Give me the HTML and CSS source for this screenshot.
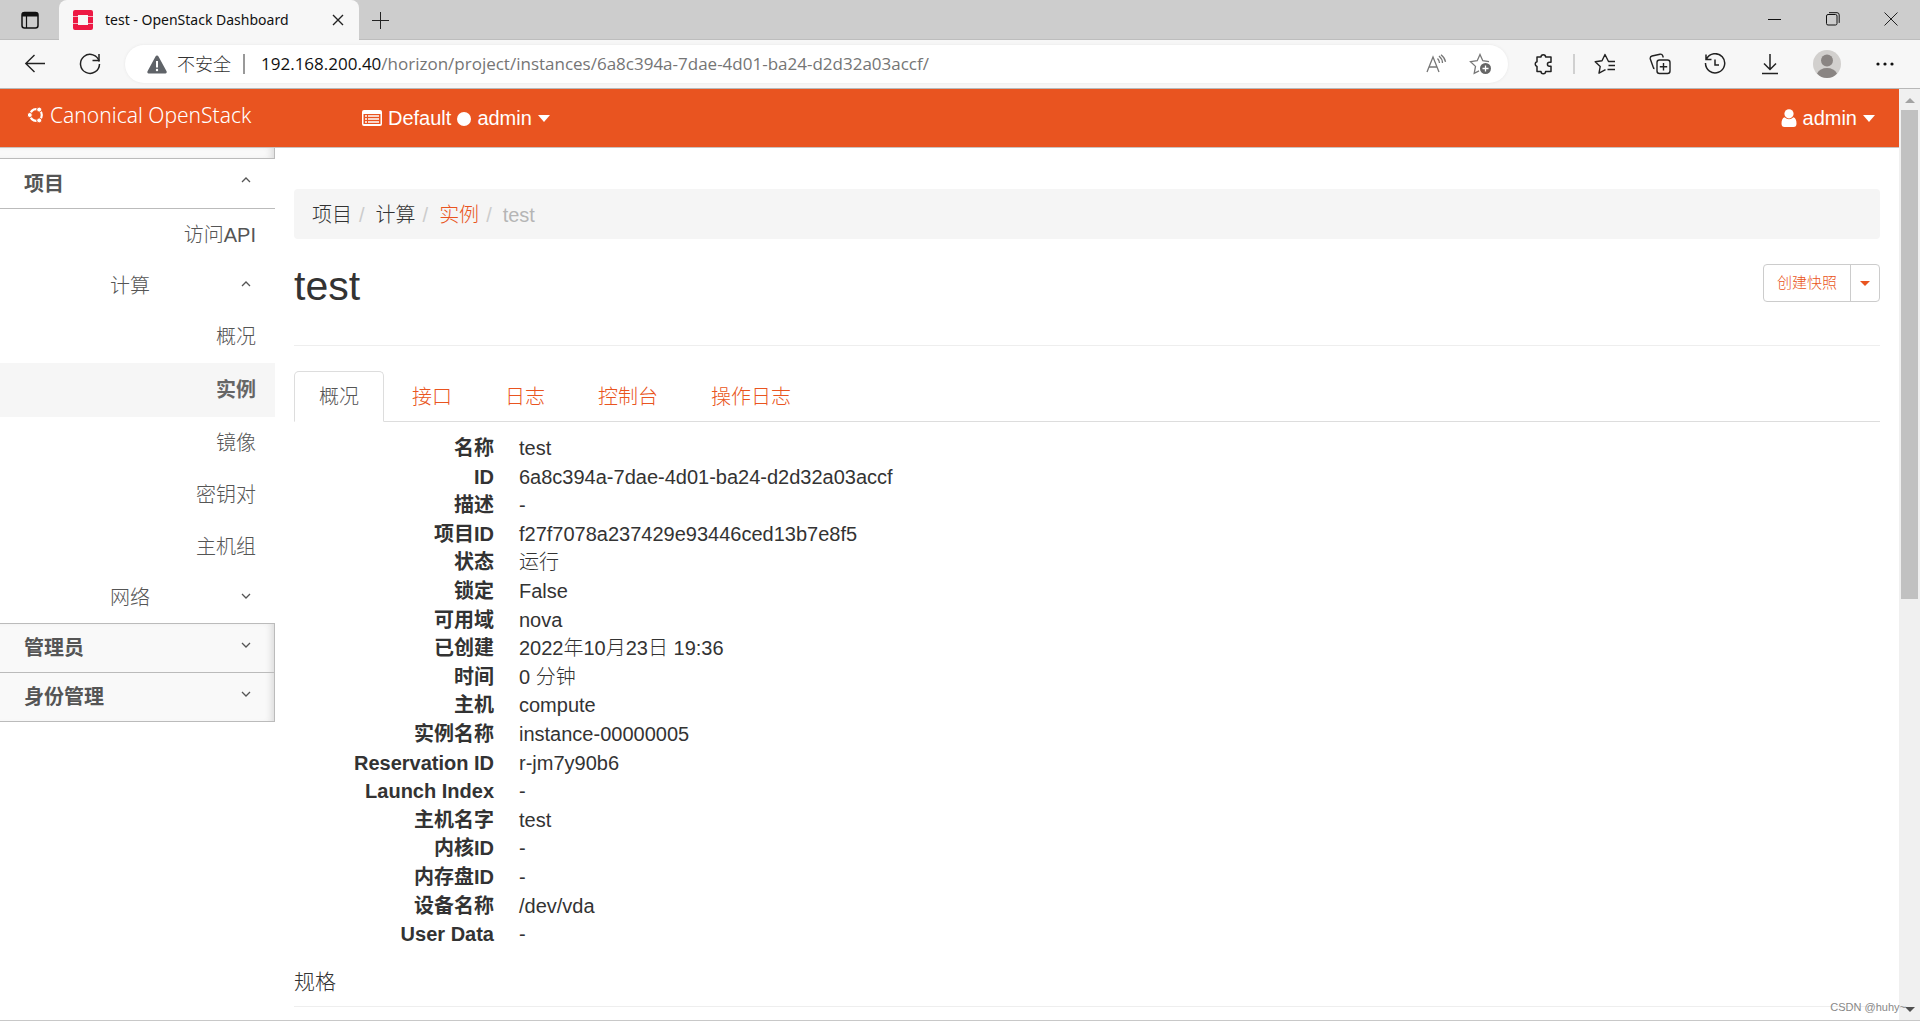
FILE: index.html
```html
<!DOCTYPE html>
<html lang="zh-CN">
<head>
<meta charset="utf-8">
<title>test - OpenStack Dashboard</title>
<link rel="stylesheet" href="styles.css">
</head>
<body>
<header class="browser">
  <div class="tabbar">
    <button class="tab-actions" aria-label="标签页操作"><svg width="20" height="20" viewBox="0 0 20 20"><rect x="2" y="2.500" width="16" height="15.500" rx="2.500" fill="none" stroke="#111" stroke-width="1.500"/><path d="M2 6V4.500Q2 2 4.500 2h11Q18 2 18 4.500V6.500H2z" fill="#111"/><path d="M6.500 6v12" stroke="#111" stroke-width="1.200"/></svg></button>
    <div class="browser-tab">
      <svg class="favicon" width="20" height="20" viewBox="0 0 20 20"><path d="M2 0h16a2 2 0 0 1 2 2v4h-5V5H5v1H0V2a2 2 0 0 1 2-2zM0 7h5v6H0zM15 7h5v6h-5zM0 14h5v1h10v-1h5v4a2 2 0 0 1-2 2H2a2 2 0 0 1-2-2z" fill="#ed1944"/><path d="M0 6h5v8H0zM15 6h5v8h-5z" fill="#ed1944" opacity=".3"/></svg>
      <span class="browser-tab-title">test - OpenStack Dashboard</span>
      <button class="tab-close" aria-label="关闭标签页"><svg width="12" height="12" viewBox="0 0 12 12"><path d="M1 1l10 10M11 1L1 11" stroke="#222" stroke-width="1.400"/></svg></button>
    </div>
    <button class="new-tab" aria-label="新建标签页"><svg width="18" height="18" viewBox="0 0 18 18"><path d="M9.500 1v17M1 9.500h17" stroke="#222"/></svg></button>
    <div class="window-controls">
      <button aria-label="最小化"><svg width="14" height="14" viewBox="0 0 14 14"><path d="M0 7.500h13" stroke="#111"/></svg></button>
      <button aria-label="还原"><svg width="14" height="14" viewBox="0 0 14 14"><rect x=".5" y="2.500" width="10.500" height="10.500" rx="1.500" fill="none" stroke="#111"/><path d="M3 .7h8q2.200 0 2.200 2.200v8" fill="none" stroke="#111"/></svg></button>
      <button aria-label="关闭"><svg width="14" height="14" viewBox="0 0 14 14"><path d="M.5.5l13 13M13.500.5l-13 13" stroke="#222"/></svg></button>
    </div>
  </div>
  <div class="toolbar">
    <button class="tool" aria-label="后退"><svg width="22" height="22" viewBox="0 0 22 22" fill="none" stroke="#222" stroke-width="1.400"><path d="M21 10.500H2M10.500 2L1.800 10.500l8.700 8.500"/></svg></button>
    <button class="tool" aria-label="刷新"><svg width="22" height="22" viewBox="0 0 22 22" fill="none" stroke="#222" stroke-width="1.500"><path d="M20.200 8.500A9.500 9.500 0 1 0 20.500 11"/><path d="M20 1v6.500h-6.500"/></svg></button>
    <form class="address">
      <svg width="20" height="19" viewBox="0 0 20 19"><path d="M10 .5Q11 .5 11.500 1.500l8.200 15Q20 18.500 18.500 18.500H1.500Q0 18.500.4 16.500l8.100-15Q9 .5 10 .5z" fill="#5f6368"/><path d="M10 6v6.500" stroke="#fff" stroke-width="2"/><circle cx="10" cy="15" r="1.200" fill="#fff"/></svg>
      <span class="insecure">不安全</span>
      <span class="address-sep"></span>
      <label class="host" for="url">192.168.200.40</label>
      <input id="url" class="url" type="text" value="/horizon/project/instances/6a8c394a-7dae-4d01-ba24-d2d32a03accf/">
      <button type="button" class="address-tool" aria-label="大声朗读"><svg width="22" height="20" viewBox="0 0 22 20" fill="none" stroke="#777" stroke-width="1.300"><path d="M2 18L8 3l6 15M4 13h8M12.500 4.500q2 2 2 4.500M14 2q3.500 3 3.500 7M16 .8q4 3.200 4.500 7"/></svg></button>
      <button type="button" class="address-tool" aria-label="添加到收藏夹"><svg width="23" height="22" viewBox="0 0 23 22"><path d="M20 8.700l-6.200-1L11 1.500 8.200 7.700l-6.700 1 5 4.700-1.300 6.900L10 17.800" fill="none" stroke="#777" stroke-width="1.300"/><circle cx="16.500" cy="15.500" r="5.500" fill="#666"/><path d="M16.500 12.500v6M13.500 15.500h6" stroke="#fff" stroke-width="1.300"/></svg></button>
    </form>
    <button class="tool" aria-label="扩展"><svg width="22" height="22" viewBox="0 0 22 22" fill="none" stroke="#222" stroke-width="1.500" stroke-linejoin="round"><path d="M4 4h4a2.300 2.300 0 0 1 4.600 0H18v5.200h-1.500a2 2 0 0 0 0 4.100H18V18.500H12.600a2.300 2.300 0 0 1-4.600 0H4v-5a2.500 2.500 0 0 1 0-4.800z"/></svg></button>
    <span class="tool-sep"></span>
    <button class="tool" aria-label="收藏夹"><svg width="22" height="22" viewBox="0 0 22 22" fill="none" stroke="#222" stroke-width="1.400" stroke-linejoin="round"><path d="M21 8.500h-6.500L11 1.500 8 7.700l-6.800 1 5 4.800L5 20.200l6.500-3.500M14.500 12.500H21M13.500 16.500H21"/></svg></button>
    <button class="tool" aria-label="集锦"><svg width="22" height="22" viewBox="0 0 22 22" fill="none" stroke="#222" stroke-width="1.400"><rect x="8" y="7" width="13" height="13.500" rx="2.500"/><path d="M14.500 10v7.500M10.800 13.800h7.400M5.500 15.500Q4.300 15.500 3.800 13L1.300 6Q.8 3.700 3 3L11 1.200q2-.4 2.700 1.500l.6 1.800"/></svg></button>
    <button class="tool" aria-label="历史记录"><svg width="22" height="22" viewBox="0 0 22 22" fill="none" stroke="#222" stroke-width="1.500"><path d="M2.500 6A9.600 9.600 0 1 1 1.500 10M2 1.500V6.500h5.500M11 6.500V12h4"/></svg></button>
    <button class="tool" aria-label="下载"><svg width="18" height="22" viewBox="0 0 18 22" fill="none" stroke="#222" stroke-width="1.500"><path d="M9 1v15M3 10.500L9 16.500l6-6M1 20.500h16"/></svg></button>
    <button class="tool tool-profile" aria-label="个人资料"><svg width="28" height="28" viewBox="0 0 28 28"><circle cx="14" cy="14" r="14" fill="#d2d0ce"/><circle cx="14" cy="10.500" r="6" fill="#8a8583"/><path d="M4 23.500q3-5.500 10-5.500t10 5.500Q20 28 14 28T4 23.500z" fill="#8a8583"/></svg></button>
    <button class="tool" aria-label="设置及其他"><svg width="18" height="4" viewBox="0 0 18 4" fill="#111"><circle cx="2" cy="2" r="1.600"/><circle cx="9" cy="2" r="1.600"/><circle cx="16" cy="2" r="1.600"/></svg></button>
  </div>
</header>

<div class="viewport">
  <div class="page">
    <nav class="navbar">
      <a class="brand" href="#"><svg width="18" height="18" viewBox="0 0 18 18"><circle cx="10" cy="9" r="5.800" fill="none" stroke="#fff" stroke-width="2.200"/><g stroke="#e95420" fill="#fff" stroke-width="1"><circle cx="3.800" cy="9" r="2.500"/><circle cx="13.200" cy="3.600" r="2.500"/><circle cx="13.200" cy="14.400" r="2.500"/></g></svg>Canonical OpenStack</a>
      <button class="nav-menu"><svg width="20" height="16" viewBox="0 0 20 16"><path d="M2 0h16a2 2 0 0 1 2 2v12a2 2 0 0 1-2 2H2a2 2 0 0 1-2-2V2a2 2 0 0 1 2-2zM1.500 4v10h17V4z" fill="#fff" fill-rule="evenodd"/><path d="M3 6h2M6 6h11M3 9h2M6 9h11M3 12h2M6 12h11" stroke="#fff" stroke-width="1.500"/></svg><span>Default</span><i class="dot"></i><span>admin</span><i class="caret"></i></button>
      <button class="nav-menu nav-user"><svg width="16" height="18" viewBox="0 0 16 18" fill="#fff"><circle cx="8" cy="4.800" r="4.600"/><path d="M3.500 8.300Q8 12 12.500 8.300 15.500 9.500 15.500 14.500q0 3.500-3 3.500h-9q-3 0-3-3.500 0-5 3-6.200z"/></svg><span>admin</span><i class="caret"></i></button>
    </nav>
    <div class="layout">
      <aside class="sidebar">
        <div class="sidebar-cap"></div>
        <section class="open">
          <a class="dashboard" href="#">项目<svg class="chevron" width="10" height="14" viewBox="0 0 10 14"><path d="M1 7l4-4 4 4"/></svg></a>
          <ul class="panels">
            <li><a class="panel" href="#">访问API</a></li>
            <li><a class="group" href="#"><span>计算</span><svg class="chevron" width="10" height="14" viewBox="0 0 10 14"><path d="M1 7l4-4 4 4"/></svg></a></li>
            <li><a class="panel" href="#">概况</a></li>
            <li><a class="panel active" href="#">实例</a></li>
            <li><a class="panel" href="#">镜像</a></li>
            <li><a class="panel" href="#">密钥对</a></li>
            <li><a class="panel" href="#">主机组</a></li>
            <li><a class="group" href="#"><span>网络</span><svg class="chevron" width="10" height="14" viewBox="0 0 10 14"><path d="M1 3l4 4 4-4"/></svg></a></li>
          </ul>
        </section>
        <section class="closed">
          <a class="dashboard" href="#">管理员<svg class="chevron" width="10" height="14" viewBox="0 0 10 14"><path d="M1 3l4 4 4-4"/></svg></a>
          <a class="dashboard" href="#">身份管理<svg class="chevron" width="10" height="14" viewBox="0 0 10 14"><path d="M1 3l4 4 4-4"/></svg></a>
        </section>
      </aside>
      <main class="content">
        <ol class="breadcrumb">
          <li>项目</li>
          <li>计算</li>
          <li><a href="#">实例</a></li>
          <li class="current">test</li>
        </ol>
        <div class="page-header">
          <h1>test</h1>
          <div class="actions">
            <button class="action">创建快照</button>
            <button class="action-more" aria-label="更多操作"><i class="caret caret-small"></i></button>
          </div>
        </div>
        <ul class="tabs">
          <li class="selected"><a href="#">概况</a></li>
          <li><a href="#">接口</a></li>
          <li><a href="#">日志</a></li>
          <li><a href="#">控制台</a></li>
          <li><a href="#">操作日志</a></li>
        </ul>
        <dl class="details">
          <dt>名称</dt><dd>test</dd>
          <dt>ID</dt><dd>6a8c394a-7dae-4d01-ba24-d2d32a03accf</dd>
          <dt>描述</dt><dd>-</dd>
          <dt>项目ID</dt><dd>f27f7078a237429e93446ced13b7e8f5</dd>
          <dt>状态</dt><dd>运行</dd>
          <dt>锁定</dt><dd>False</dd>
          <dt>可用域</dt><dd>nova</dd>
          <dt>已创建</dt><dd>2022年10月23日 19:36</dd>
          <dt>时间</dt><dd>0 分钟</dd>
          <dt>主机</dt><dd>compute</dd>
          <dt>实例名称</dt><dd>instance-00000005</dd>
          <dt>Reservation ID</dt><dd>r-jm7y90b6</dd>
          <dt>Launch Index</dt><dd>-</dd>
          <dt>主机名字</dt><dd>test</dd>
          <dt>内核ID</dt><dd>-</dd>
          <dt>内存盘ID</dt><dd>-</dd>
          <dt>设备名称</dt><dd>/dev/vda</dd>
          <dt>User Data</dt><dd>-</dd>
        </dl>
        <h4 class="section-title">规格</h4>
      </main>
    </div>
  </div>
  <div class="scrollbar">
    <i class="arrow arrow-up"></i>
    <div class="track"><div class="thumb"></div></div>
    <i class="arrow arrow-down"></i>
  </div>
  <div class="watermark">CSDN @huhy~</div>
</div>
</body>
</html>
```
FILE: styles.css
```css
* { box-sizing: border-box; }

body {
  margin: 0;
  height: 100vh;
  display: flex;
  flex-direction: column;
  overflow: hidden;
  background: #fff;
  color: #333;
  font: 300 20px/28px "Liberation Sans", "Noto Sans CJK SC", sans-serif;
}

button, input { font: inherit; color: inherit; border: 0; padding: 0; background: none; }
button { display: flex; align-items: center; justify-content: center; }
a { color: inherit; text-decoration: none; }
ul, ol, dl { margin: 0; padding: 0; list-style: none; }
svg { flex: none; }

/* browser window */
.browser { flex: none; font-family: "Open Sans", "Noto Sans CJK SC", sans-serif; font-weight: 400; }

.tabbar {
  display: flex;
  height: 40px;
  background: #cdcdcd;
  box-shadow: inset 0 -1px #bdbdbd;
}
.tab-actions { width: 59px; height: 39px; }
.browser-tab {
  display: flex;
  align-items: center;
  width: 300px;
  padding: 0 14px;
  background: #f7f7f7;
  border-radius: 8px 8px 0 0;
}
.browser-tab-title { flex: 1; margin-left: 12px; font-family: "Noto Sans", sans-serif; font-size: 14px; line-height: 20px; color: #111; white-space: nowrap; }
.tab-close { width: 14px; height: 20px; }
.new-tab { width: 42px; height: 39px; }
.window-controls { display: flex; margin-left: auto; }
.window-controls button { width: 58px; height: 38px; }

.toolbar {
  display: flex;
  align-items: center;
  height: 49px;
  padding: 0 8px 0 7px;
  background: #f7f7f7;
  border-bottom: 1px solid #b8b8b8;
}
.tool { width: 55px; height: 40px; }
.tool-profile { width: 60px; }
.tool-sep { width: 2px; height: 20px; margin: 0 2px; background: #d0d0d0; }
.address {
  flex: 1;
  display: flex;
  align-items: center;
  height: 38px;
  margin: 0 8px;
  padding: 0 6px 0 22px;
  border-radius: 19px;
  background: #fff;
  font-size: 17px;
  line-height: 24px;
  box-shadow: 0 0 3px #e6e6e6;
}
.insecure { margin-left: 10px; font-size: 18px; font-weight: 300; color: #333; }
.address-sep { width: 2px; height: 20px; margin: 0 16px 0 12px; background: #999; }
.host { color: #111; }
.url { flex: 1; min-width: 0; color: #757575; outline: 0; }
.address-tool { width: 44px; height: 36px; }

/* horizon page */
.viewport {
  position: relative;
  flex: 1;
  display: flex;
  min-height: 0;
  border-bottom: 1px solid #c8c8c8;
}
.page { flex: 1; min-width: 0; overflow: hidden; }

.navbar {
  display: flex;
  align-items: center;
  height: 59px;
  padding: 0 24px 0 26px;
  background: #e95420;
  border-bottom: 1px solid #c9c3c0;
  color: #fff;
}
.brand {
  display: flex;
  align-items: center;
  gap: 6px;
  width: 336px;
  padding-bottom: 6px;
  font-family: "Noto Sans", sans-serif;
  font-size: 21px;
}
.nav-menu { gap: 6px; }
.nav-user { margin-left: auto; }
.dot { width: 14px; height: 14px; margin: 2px 0 0; border-radius: 50%; background: #fff; }
.caret { border: 6px solid transparent; border-top: 7px solid currentColor; border-bottom: 0; }
.caret-small { border-width: 5px; border-bottom: 0; }

.layout { display: flex; align-items: flex-start; }

.sidebar { flex: none; width: 275px; color: #555; }
.sidebar-cap, .closed {
  background: #f9f9f9;
  border-right: 1px solid #bbb;
  box-shadow: inset -6px 0 6px -3px #ddd;
}
.sidebar-cap { height: 11px; border-bottom: 1px solid #bbb; }
.dashboard {
  display: flex;
  align-items: center;
  justify-content: space-between;
  height: 50px;
  padding: 0 24px;
  border-bottom: 1px solid #bbb;
  font-weight: 700;
}
.closed { border-top: 1px solid #bbb; }
.closed .dashboard { height: 49px; padding-right: 23px; }
.chevron { fill: none; stroke: #555; stroke-width: 1.3; }
.dashboard .chevron { margin-bottom: 3px; }
.panel { display: flex; align-items: center; justify-content: flex-end; height: 52px; padding-right: 19px; }
.active { height: 54px; background: #f6f6f6; font-weight: 700; color: #666; }
.group { display: flex; align-items: center; justify-content: space-between; height: 50px; padding: 0 24px 0 110px; }

.content { flex: 1; min-width: 0; padding: 41px 19px 0; }

.breadcrumb {
  display: flex;
  align-items: center;
  height: 50px;
  padding: 2px 18px 0;
  border-radius: 4px;
  background: #f5f5f5;
}
.breadcrumb li + li::before { content: "/"; padding: 0 11px 0 7px; color: #ccc; }
.breadcrumb a { color: #e95420; }
.breadcrumb .current { color: #b5b5b5; }

.page-header {
  display: flex;
  align-items: flex-start;
  justify-content: space-between;
  height: 107px;
  padding-top: 25px;
  border-bottom: 1px solid #eee;
}
h1 { margin: 0; font-size: 41px; line-height: 44px; font-weight: 400; }
.actions { display: flex; height: 38px; border: 1px solid #ccc; border-radius: 4px; color: #e95420; }
.action { padding: 0 13px; font-size: 15px; font-weight: 300; line-height: 20px; }
.action-more { width: 29px; border-left: 1px solid #ccc; }

.tabs { display: flex; gap: 3px; margin-top: 25px; border-bottom: 1px solid #ddd; color: #e95420; }
.tabs a {
  display: block;
  height: 51px;
  margin-bottom: -1px;
  padding: 11px 24px;
  border: 1px solid transparent;
  border-radius: 5px 5px 0 0;
}
.tabs .selected a { border-color: #ddd; border-bottom-color: #fff; background: #fff; color: #555; }

.details {
  display: grid;
  grid-template-columns: 200px 1fr;
  column-gap: 25px;
  margin-top: 12px;
  line-height: 1.43;
}
dt { font-weight: 700; text-align: right; }
dd { margin: 0; }

.section-title {
  margin: 5px 0 0;
  padding: 14px 0 10px;
  border-bottom: 1px solid #eee;
  font-size: 21px;
  font-weight: 300;
  line-height: 28px;
}

.scrollbar { display: flex; flex-direction: column; align-items: center; width: 21px; background: #f0f0f0; }
.track { flex: 1; width: 17px; }
.thumb { height: 55%; background: #c1c1c1; }
.arrow { border: 5px solid transparent; }
.arrow-up { margin: 4px 0 7px; border-bottom-color: #a3a3a3; }
.arrow-down { margin: 8px 0 3px; border-top-color: #505050; }

.watermark { position: absolute; right: 14px; bottom: 4px; font-size: 11px; line-height: 18px; font-weight: 400; color: #888; }
```
